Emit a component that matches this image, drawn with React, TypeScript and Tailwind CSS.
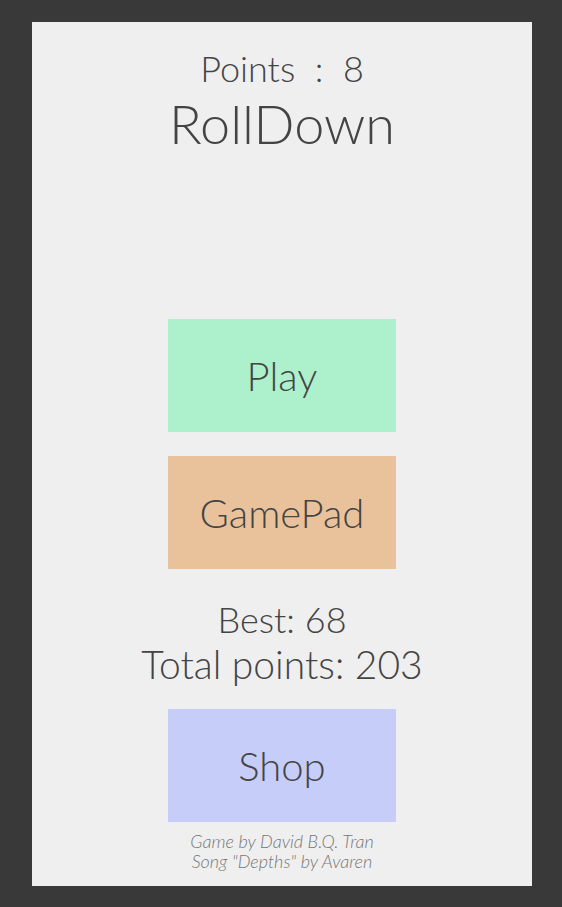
import React from 'react';

const MenuButton: React.FC<{ label: string; color: string }> = ({ label, color }) => (
  <button className={`w-[228px] h-[113px] flex items-center justify-center text-[40px] font-light text-[#444] ${color}`}>
    {label}
  </button>
);

const App: React.FC = () => {
  return (
    <div className="w-[562px] h-[907px] bg-[#393939] pt-[22px] pl-[32px]" style={{ fontFamily: 'Lato, "Open Sans", sans-serif' }}>
      <div className="w-[500px] h-[864px] bg-[#efefef] flex flex-col items-center text-[#444]">
        <div className="mt-[24px] text-[36px] leading-[44px] font-light whitespace-pre">Points  :  8</div>
        <div className="mt-[3px] text-[54px] leading-[62px] font-light">RollDown</div>

        <div className="mt-[164px]">
          <MenuButton label="Play" color="bg-[#adf0cc]" />
        </div>
        <div className="mt-[24px]">
          <MenuButton label="GamePad" color="bg-[#e9c29c]" />
        </div>

        <div className="mt-[28px] text-[36px] leading-[44px] font-light">Best: 68</div>
        <div className="text-[39px] leading-[46px] font-light">Total points: 203</div>

        <div className="mt-[22px]">
          <MenuButton label="Shop" color="bg-[#c5cdf8]" />
        </div>

        <div className="mt-[9px] text-[18px] leading-[20px] italic font-light text-[#777] text-center">
          <div>Game by David B.Q. Tran</div>
          <div>Song "Depths" by Avaren</div>
        </div>
      </div>
    </div>
  );
};

export default App;
